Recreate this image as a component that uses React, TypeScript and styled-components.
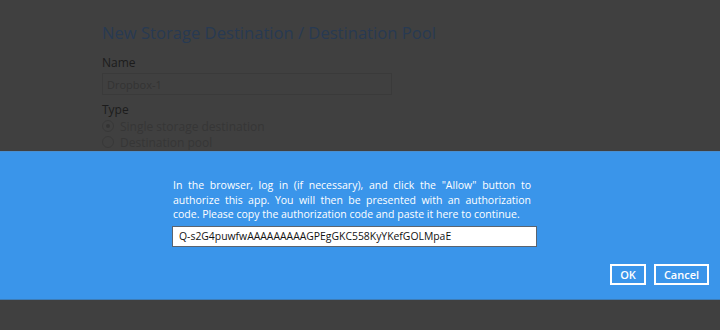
import styled, { createGlobalStyle } from "styled-components"

const Global = createGlobalStyle`
    html, body { margin: 0; padding: 0; }
    body {
        background: #404040;
        font-family: "Open Sans", "Liberation Sans", sans-serif;
        width: 720px;
        height: 330px;
        overflow: hidden;
    }
`

const Screen = styled.div({
    position: 'relative',
    width: 720,
    height: 330,
    background: '#404040',
})

const Page = styled.div({
    display: 'flex',
    flexDirection: 'column',
    padding: '21px 0 0 102px',
})

const Title = styled.h1({
    margin: 0,
    fontSize: 16.6,
    fontWeight: 400,
    color: '#283a52',
    lineHeight: '24px',
})

const Label = styled.div<{ $gap: number }>`
    margin-top: ${p => p.$gap}px;
    font-size: 12px;
    color: #1c1c1c;
    line-height: 16px;
`

const NameInput = styled.div({
    marginTop: 2,
    width: 284,
    height: 20,
    border: '1px solid #3a3a3a',
    display: 'flex',
    alignItems: 'center',
    paddingLeft: 4,
    fontSize: 11,
    color: '#333',
})

const Radios = styled.div({
    display: 'flex',
    flexDirection: 'column',
})

const RadioRow = styled.div({
    display: 'flex',
    alignItems: 'center',
    gap: 6,
    height: 16,
    fontSize: 12,
    color: '#363636',
})

const RadioDot = styled.span<{ $on?: boolean }>`
    width: 10px;
    height: 10px;
    border-radius: 50%;
    border: 1px solid #383838;
    display: flex;
    align-items: center;
    justify-content: center;
    &::after {
        content: '';
        width: 4px;
        height: 4px;
        border-radius: 50%;
        background: ${p => p.$on ? '#333' : 'transparent'};
    }
`

const Band = styled.div({
    position: 'absolute',
    left: 0,
    top: 151,
    width: 720,
    height: 149,
    background: '#3a95ea',
    borderTop: '1px solid #4a8fd0',
    borderBottom: '1px solid #3d7cb6',
    boxSizing: 'border-box',
    display: 'flex',
    flexDirection: 'column',
})

const Body = styled.div({
    display: 'flex',
    flexDirection: 'column',
    width: 365,
    marginLeft: 172,
    paddingTop: 26,
    gap: 4,
})

const Message = styled.p({
    margin: 0,
    padding: '0 6px 0 1px',
    fontSize: 10.5,
    lineHeight: '14.6px',
    color: '#fff',
    textAlign: 'justify',
    textAlignLast: 'left',
})

const CodeInput = styled.input({
    width: 365,
    height: 21,
    boxSizing: 'border-box',
    border: '1px solid #5a6470',
    padding: '0 6px',
    fontFamily: '"Open Sans", sans-serif',
    fontSize: 10.4,
    color: '#111',
    background: '#fff',
    outline: 'none',
})

const Actions = styled.div({
    display: 'flex',
    justifyContent: 'flex-end',
    gap: 8,
    marginTop: 'auto',
    padding: '0 11px 14px 0',
})

const Button = styled.button<{ $w: number }>`
    width: ${p => p.$w}px;
    height: 21px;
    box-sizing: border-box;
    border: 2px solid #fff;
    background: transparent;
    color: #fff;
    font-family: "Open Sans", sans-serif;
    font-size: 11px;
    font-weight: 600;
    padding: 0;
    cursor: pointer;
`

export default function App() {
    return <Screen>
        <Global />
        <Page>
            <Title>New Storage Destination / Destination Pool</Title>
            <Label $gap={10}>Name</Label>
            <NameInput>Dropbox-1</NameInput>
            <Label $gap={7}>Type</Label>
            <Radios>
                <RadioRow><RadioDot $on />Single storage destination</RadioRow>
                <RadioRow><RadioDot />Destination pool</RadioRow>
            </Radios>
        </Page>
        <Band>
            <Body>
                <Message>
                    In the browser, log in (if necessary), and click the "Allow" button to authorize this app. You will then be presented with an authorization code. Please copy the authorization code and paste it here to continue.
                </Message>
                <CodeInput defaultValue="Q-s2G4puwfwAAAAAAAAAGPEgGKC558KyYKefGOLMpaE" />
            </Body>
            <Actions>
                <Button $w={36}>OK</Button>
                <Button $w={55}>Cancel</Button>
            </Actions>
        </Band>
    </Screen>
}
